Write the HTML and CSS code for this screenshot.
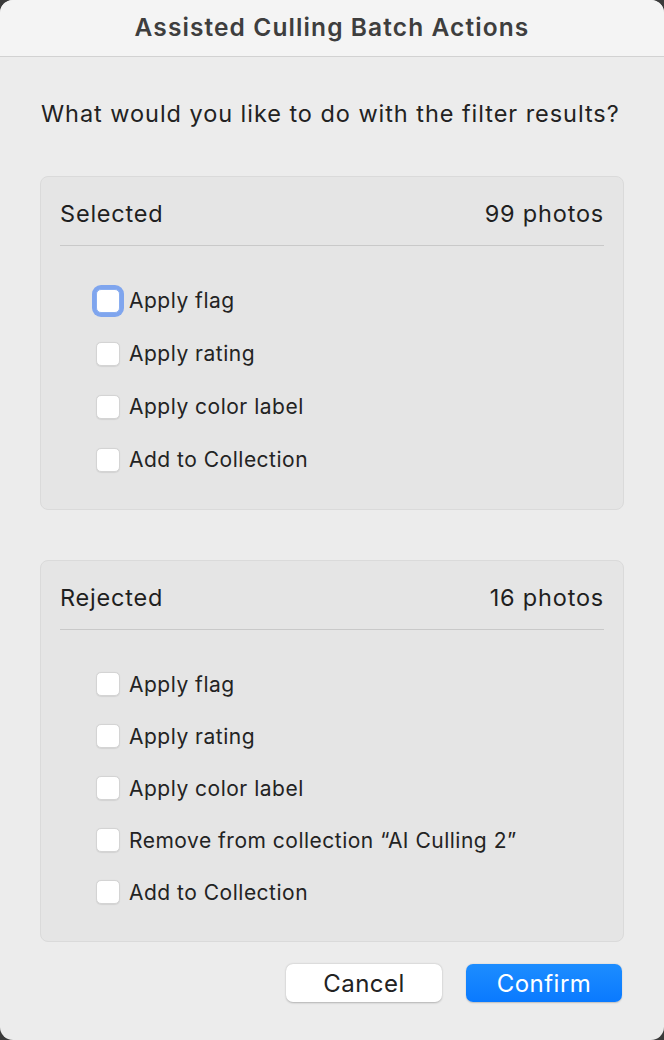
FILE: index.html
```html
<!DOCTYPE html>
<html lang="en">
<head>
    <meta charset="UTF-8">
    <meta name="viewport" content="width=device-width, initial-scale=1.0">
    <title>Assisted Culling Batch Actions</title>
    <link rel="stylesheet" href="styles.css">
</head>
<body>

    <div class="dialog">
        <div class="titlebar">Assisted Culling Batch Actions</div>

        <div class="content">
            <p class="question">What would you like to do with the filter results?</p>

            <div class="panel">
                <div class="panel-header">
                    <span>Selected</span>
                    <span>99 photos</span>
                </div>
                <div class="options">
                    <label class="option"><span class="box focused"></span>Apply flag</label>
                    <label class="option"><span class="box"></span>Apply rating</label>
                    <label class="option"><span class="box"></span>Apply color label</label>
                    <label class="option"><span class="box"></span>Add to Collection</label>
                </div>
            </div>

            <div class="panel">
                <div class="panel-header">
                    <span>Rejected</span>
                    <span>16 photos</span>
                </div>
                <div class="options compact">
                    <label class="option"><span class="box"></span>Apply flag</label>
                    <label class="option"><span class="box"></span>Apply rating</label>
                    <label class="option"><span class="box"></span>Apply color label</label>
                    <label class="option"><span class="box"></span>Remove from collection “AI Culling 2”</label>
                    <label class="option"><span class="box"></span>Add to Collection</label>
                </div>
            </div>

            <div class="buttons">
                <button class="btn cancel">Cancel</button>
                <button class="btn confirm">Confirm</button>
            </div>
        </div>
    </div>

</body>
</html>
```

FILE: styles.css
```css
html, body {
    margin: 0;
    height: 100%;
    background: #3b3b3b;
}
body {
    font-family: Inter, "Noto Sans", sans-serif;
    color: #1f1f1f;
}
.dialog {
    height: 1040px;
    background: #ececec;
    border-radius: 13px;
    overflow: hidden;
    display: flex;
    flex-direction: column;
}
.titlebar {
    height: 57px;
    background: #f4f4f4;
    border-bottom: 1.5px solid #d2d2d2;
    display: flex;
    align-items: center;
    justify-content: center;
    font-size: 24.5px;
    font-weight: 600;
    color: #3e3e3e;
    letter-spacing: 1.1px;
    padding-bottom: 3px;
    box-sizing: border-box;
}
.content {
    padding: 0 40px;
}
.question {
    margin: 41px 0 0 1px;
    font-size: 23.5px;
    line-height: 32px;
    letter-spacing: 0.95px;
    color: #222;
}
.panel {
    margin-top: 46px;
    background: #e5e5e5;
    border: 1px solid #dadada;
    border-radius: 8px;
    padding: 0 19px;
}
.panel + .panel {
    margin-top: 50px;
}
.panel-header {
    display: flex;
    justify-content: space-between;
    font-size: 23.5px;
    line-height: 32px;
    letter-spacing: 0.8px;
    padding: 21px 0 15px;
    border-bottom: 1.5px solid #c9c9c9;
}
.options {
    padding: 28px 0 23px 36px;
}
.option {
    display: flex;
    align-items: center;
    height: 53px;
    font-size: 21px;
    letter-spacing: 0.5px;
    color: #232323;
}
.compact .option {
    height: 52px;
}
.box {
    flex: none;
    width: 22px;
    height: 22px;
    margin-right: 9px;
    background: #fff;
    border: 1px solid #d4d4d4;
    border-radius: 5px;
    box-shadow: 0 0.5px 1px rgba(0, 0, 0, 0.08);
}
.box.focused {
    border-color: #8aaef0;
    box-shadow: 0 0 0 4px #7fa5ee;
}
.buttons {
    display: flex;
    justify-content: flex-end;
    gap: 24px;
    margin-top: 22px;
    padding-right: 2px;
}
.btn {
    width: 156px;
    height: 38px;
    border: none;
    border-radius: 7px;
    font-family: Inter, "Noto Sans", sans-serif;
    font-size: 24px;
    letter-spacing: 0.5px;
    cursor: pointer;
}
.cancel {
    background: #fff;
    color: #222;
    box-shadow: 0 0.5px 2px rgba(0, 0, 0, 0.25);
}
.confirm {
    background: linear-gradient(#1d8dff, #0a7aff);
    color: #fff;
    box-shadow: 0 0.5px 1.5px rgba(0, 0, 0, 0.2);
}
```
